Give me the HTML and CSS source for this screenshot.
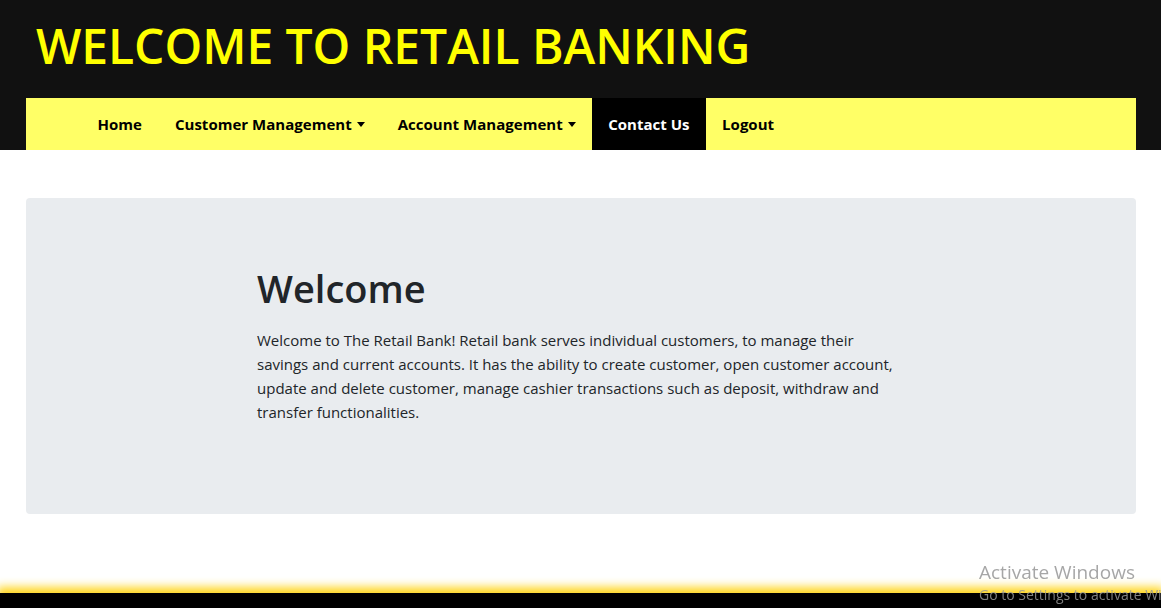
FILE: index.html
```html
<!DOCTYPE html>
<html lang="en">
<head>
<meta charset="utf-8">
<title>Retail Banking</title>
<link rel="stylesheet" href="styles.css">
</head>
<body>
<header class="site-header">
  <h1 class="site-title">WELCOME TO RETAIL BANKING</h1>
  <nav class="main-nav">
    <a class="nav-link" href="#">Home</a>
    <a class="nav-link dropdown" href="#">Customer Management<span class="caret"></span></a>
    <a class="nav-link dropdown" href="#">Account Management<span class="caret"></span></a>
    <a class="nav-link active" href="#">Contact Us</a>
    <a class="nav-link" href="#">Logout</a>
  </nav>
</header>
<main class="page">
  <section class="jumbotron">
    <div class="jumbo-inner">
      <h2 class="jumbo-title">Welcome</h2>
      <p class="jumbo-text">Welcome to The Retail Bank! Retail bank serves individual customers, to manage their savings and current accounts. It has the ability to create customer, open customer account, update and delete customer, manage cashier transactions such as deposit, withdraw and transfer functionalities.</p>
    </div>
  </section>
</main>
<footer class="site-footer"></footer>
<div class="watermark">
  <div class="wm-title">Activate Windows</div>
  <div class="wm-sub">Go to Settings to activate Windows.</div>
</div>
</body>
</html>
```
FILE: styles.css
```css
html {
  overflow: hidden;
}
body {
  margin: 0;
  font-family: "Open Sans", "Noto Sans", sans-serif;
  color: #212529;
  background: #fff;
  height: 608px;
  display: flex;
  flex-direction: column;
}
.site-header {
  background: #111111;
  padding: 14px 25px 0 26px;
}
.site-title {
  margin: 0 0 0 10px;
  color: #ffff00;
  font-size: 48px;
  font-weight: 600;
  line-height: 64px;
  letter-spacing: -0.05px;
}
.main-nav {
  margin-top: 20px;
  height: 52px;
  background: #ffff66;
  display: flex;
  align-items: stretch;
  padding-left: 55px;
}
.nav-link {
  display: flex;
  align-items: center;
  padding: 0 16.5px;
  color: #000;
  font-size: 15px;
  font-weight: 700;
  letter-spacing: 0.02px;
  text-decoration: none;
}
.nav-link.active {
  background: #000;
  color: #fff;
  padding: 0 16px;
}
.caret {
  display: inline-block;
  margin-left: 5px;
  border-top: 5px solid #000;
  border-left: 4.5px solid transparent;
  border-right: 4.5px solid transparent;
  position: relative;
  top: 0;
}
.page {
  flex: 1;
  padding: 48px 25px 0 26px;
}
.jumbotron {
  background: #e9ecef;
  border-radius: 4px;
  height: 316px;
  box-sizing: border-box;
  padding-top: 66px;
}
.jumbo-inner {
  width: 648px;
  margin: 0 auto;
}
.jumbo-title {
  margin: 0 0 16px;
  font-size: 38px;
  font-weight: 600;
  line-height: 48px;
}
.jumbo-text {
  margin: 0;
  font-size: 15px;
  line-height: 24px;
}
.site-footer {
  height: 15px;
  background: #000;
  box-shadow: 0 -3px 10px 3px #ffd61f;
}
.watermark {
  position: fixed;
  left: 979px;
  top: 560px;
  color: rgba(150, 150, 150, 0.85);
  font-family: "Open Sans", "Noto Sans", sans-serif;
  white-space: nowrap;
}
.wm-title {
  font-size: 19px;
  line-height: 25px;
}
.wm-sub {
  font-size: 14px;
  line-height: 20px;
}
```
